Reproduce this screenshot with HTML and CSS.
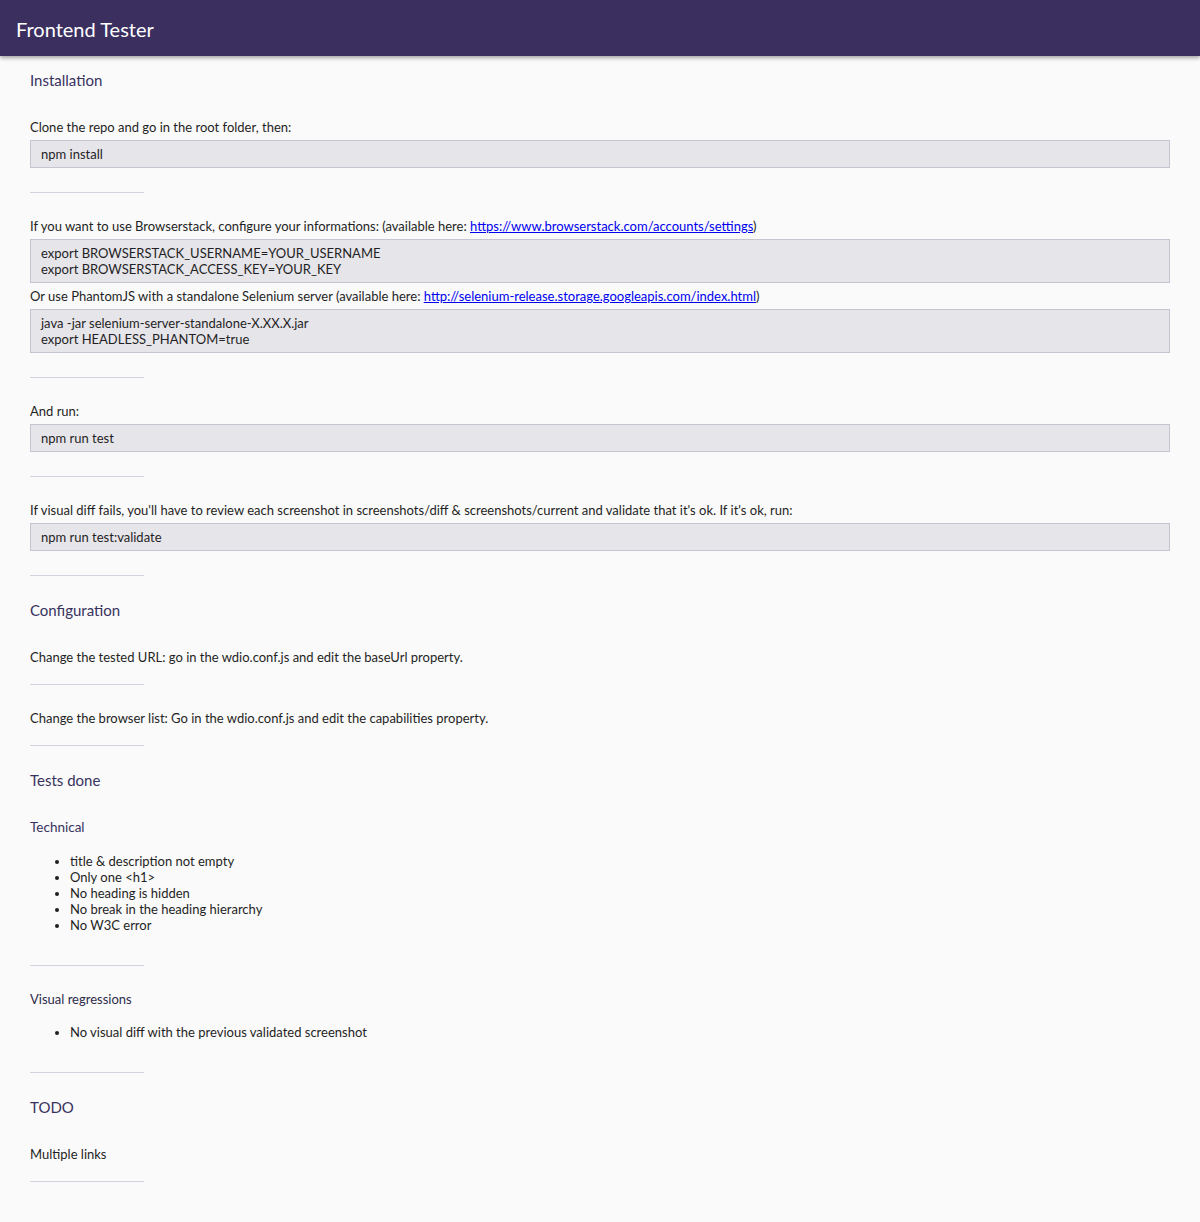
FILE: index.html
```
<!DOCTYPE html>
<html lang="en">
<head>
<meta charset="utf-8">
<title>Frontend Tester</title>
<link rel="stylesheet" href="styles.css">
</head>
<body>
<header class="topbar"><h1 class="brand">Frontend Tester</h1></header>
<main class="content">
  <h2 class="title">Installation</h2>
  <p class="text">Clone the repo and go in the root folder, then:</p>
  <pre class="code">npm install</pre>
  <hr class="sep">
  <p class="text">If you want to use Browserstack, configure your informations: (available here: <a href="#">https://www.browserstack.com/accounts/settings</a>)</p>
  <pre class="code code-mid">export BROWSERSTACK_USERNAME=YOUR_USERNAME
export BROWSERSTACK_ACCESS_KEY=YOUR_KEY</pre>
  <p class="text">Or use PhantomJS with a standalone Selenium server (available here: <a href="#">http://selenium-release.storage.googleapis.com/index.html</a>)</p>
  <pre class="code">java -jar selenium-server-standalone-X.XX.X.jar
export HEADLESS_PHANTOM=true</pre>
  <hr class="sep">
  <p class="text">And run:</p>
  <pre class="code">npm run test</pre>
  <hr class="sep">
  <p class="text">If visual diff fails, you'll have to review each screenshot in screenshots/diff &amp; screenshots/current and validate that it's ok. If it's ok, run:</p>
  <pre class="code">npm run test:validate</pre>
  <hr class="sep">
  <h2 class="title">Configuration</h2>
  <p class="text">Change the tested URL: go in the wdio.conf.js and edit the baseUrl property.</p>
  <hr class="sep">
  <p class="text">Change the browser list: Go in the wdio.conf.js and edit the capabilities property.</p>
  <hr class="sep">
  <h2 class="title">Tests done</h2>
  <h3 class="subtitle">Technical</h3>
  <ul class="list">
    <li>title &amp; description not empty</li>
    <li>Only one &lt;h1&gt;</li>
    <li>No heading is hidden</li>
    <li>No break in the heading hierarchy</li>
    <li>No W3C error</li>
  </ul>
  <hr class="sep">
  <h4 class="minor">Visual regressions</h4>
  <ul class="list list-minor">
    <li>No visual diff with the previous validated screenshot</li>
  </ul>
  <hr class="sep">
  <h2 class="title">TODO</h2>
  <p class="text">Multiple links</p>
  <hr class="sep">
</main>
</body>
</html>
```

FILE: styles.css
```
html, body {
  margin: 0;
  padding: 0;
  background: #fafafa;
}
body {
  font-family: Lato, "Noto Sans", sans-serif;
  font-size: 13px;
  line-height: 16px;
  color: #1f1f24;
}
.topbar {
  height: 56px;
  background: #3a2f5f;
  box-shadow: 0 2px 4px rgba(0, 0, 0, 0.35);
  display: flex;
  align-items: center;
  padding: 0 16px;
  position: relative;
}
.brand {
  margin: 0;
  font-size: 20px;
  font-weight: 400;
  color: #ffffff;
  line-height: 24px;
  padding-top: 1px;
}
.content {
  padding: 15px 30px 16px;
}
.title {
  margin: 0 0 30px;
  font-size: 15px;
  line-height: 18px;
  font-weight: 400;
  color: #38325e;
}
.subtitle {
  margin: 0;
  font-size: 13.5px;
  line-height: 16px;
  font-weight: 400;
  color: #38325e;
}
.minor {
  margin: 0;
  font-size: 13px;
  line-height: 16px;
  font-weight: 400;
  color: #2e2b4a;
}
.text {
  margin: 0;
}
.text a {
  color: #0000ee;
  text-decoration: underline;
}
.code {
  margin: 5px 0 24px;
  padding: 5px 10px;
  background: #e6e5ea;
  border: 1px solid #c6c4d0;
  font-family: inherit;
  font-size: 13px;
  line-height: 16px;
  white-space: pre;
}
.code-mid {
  margin-bottom: 5px;
}
.sep {
  width: 114px;
  height: 1px;
  border: 0;
  background: #d3d2e0;
  margin: 19px 0 25px;
}
.list {
  margin: 18px 0 32px;
  padding-left: 40px;
}
.list-minor {
  margin-top: 17px;
}
```
